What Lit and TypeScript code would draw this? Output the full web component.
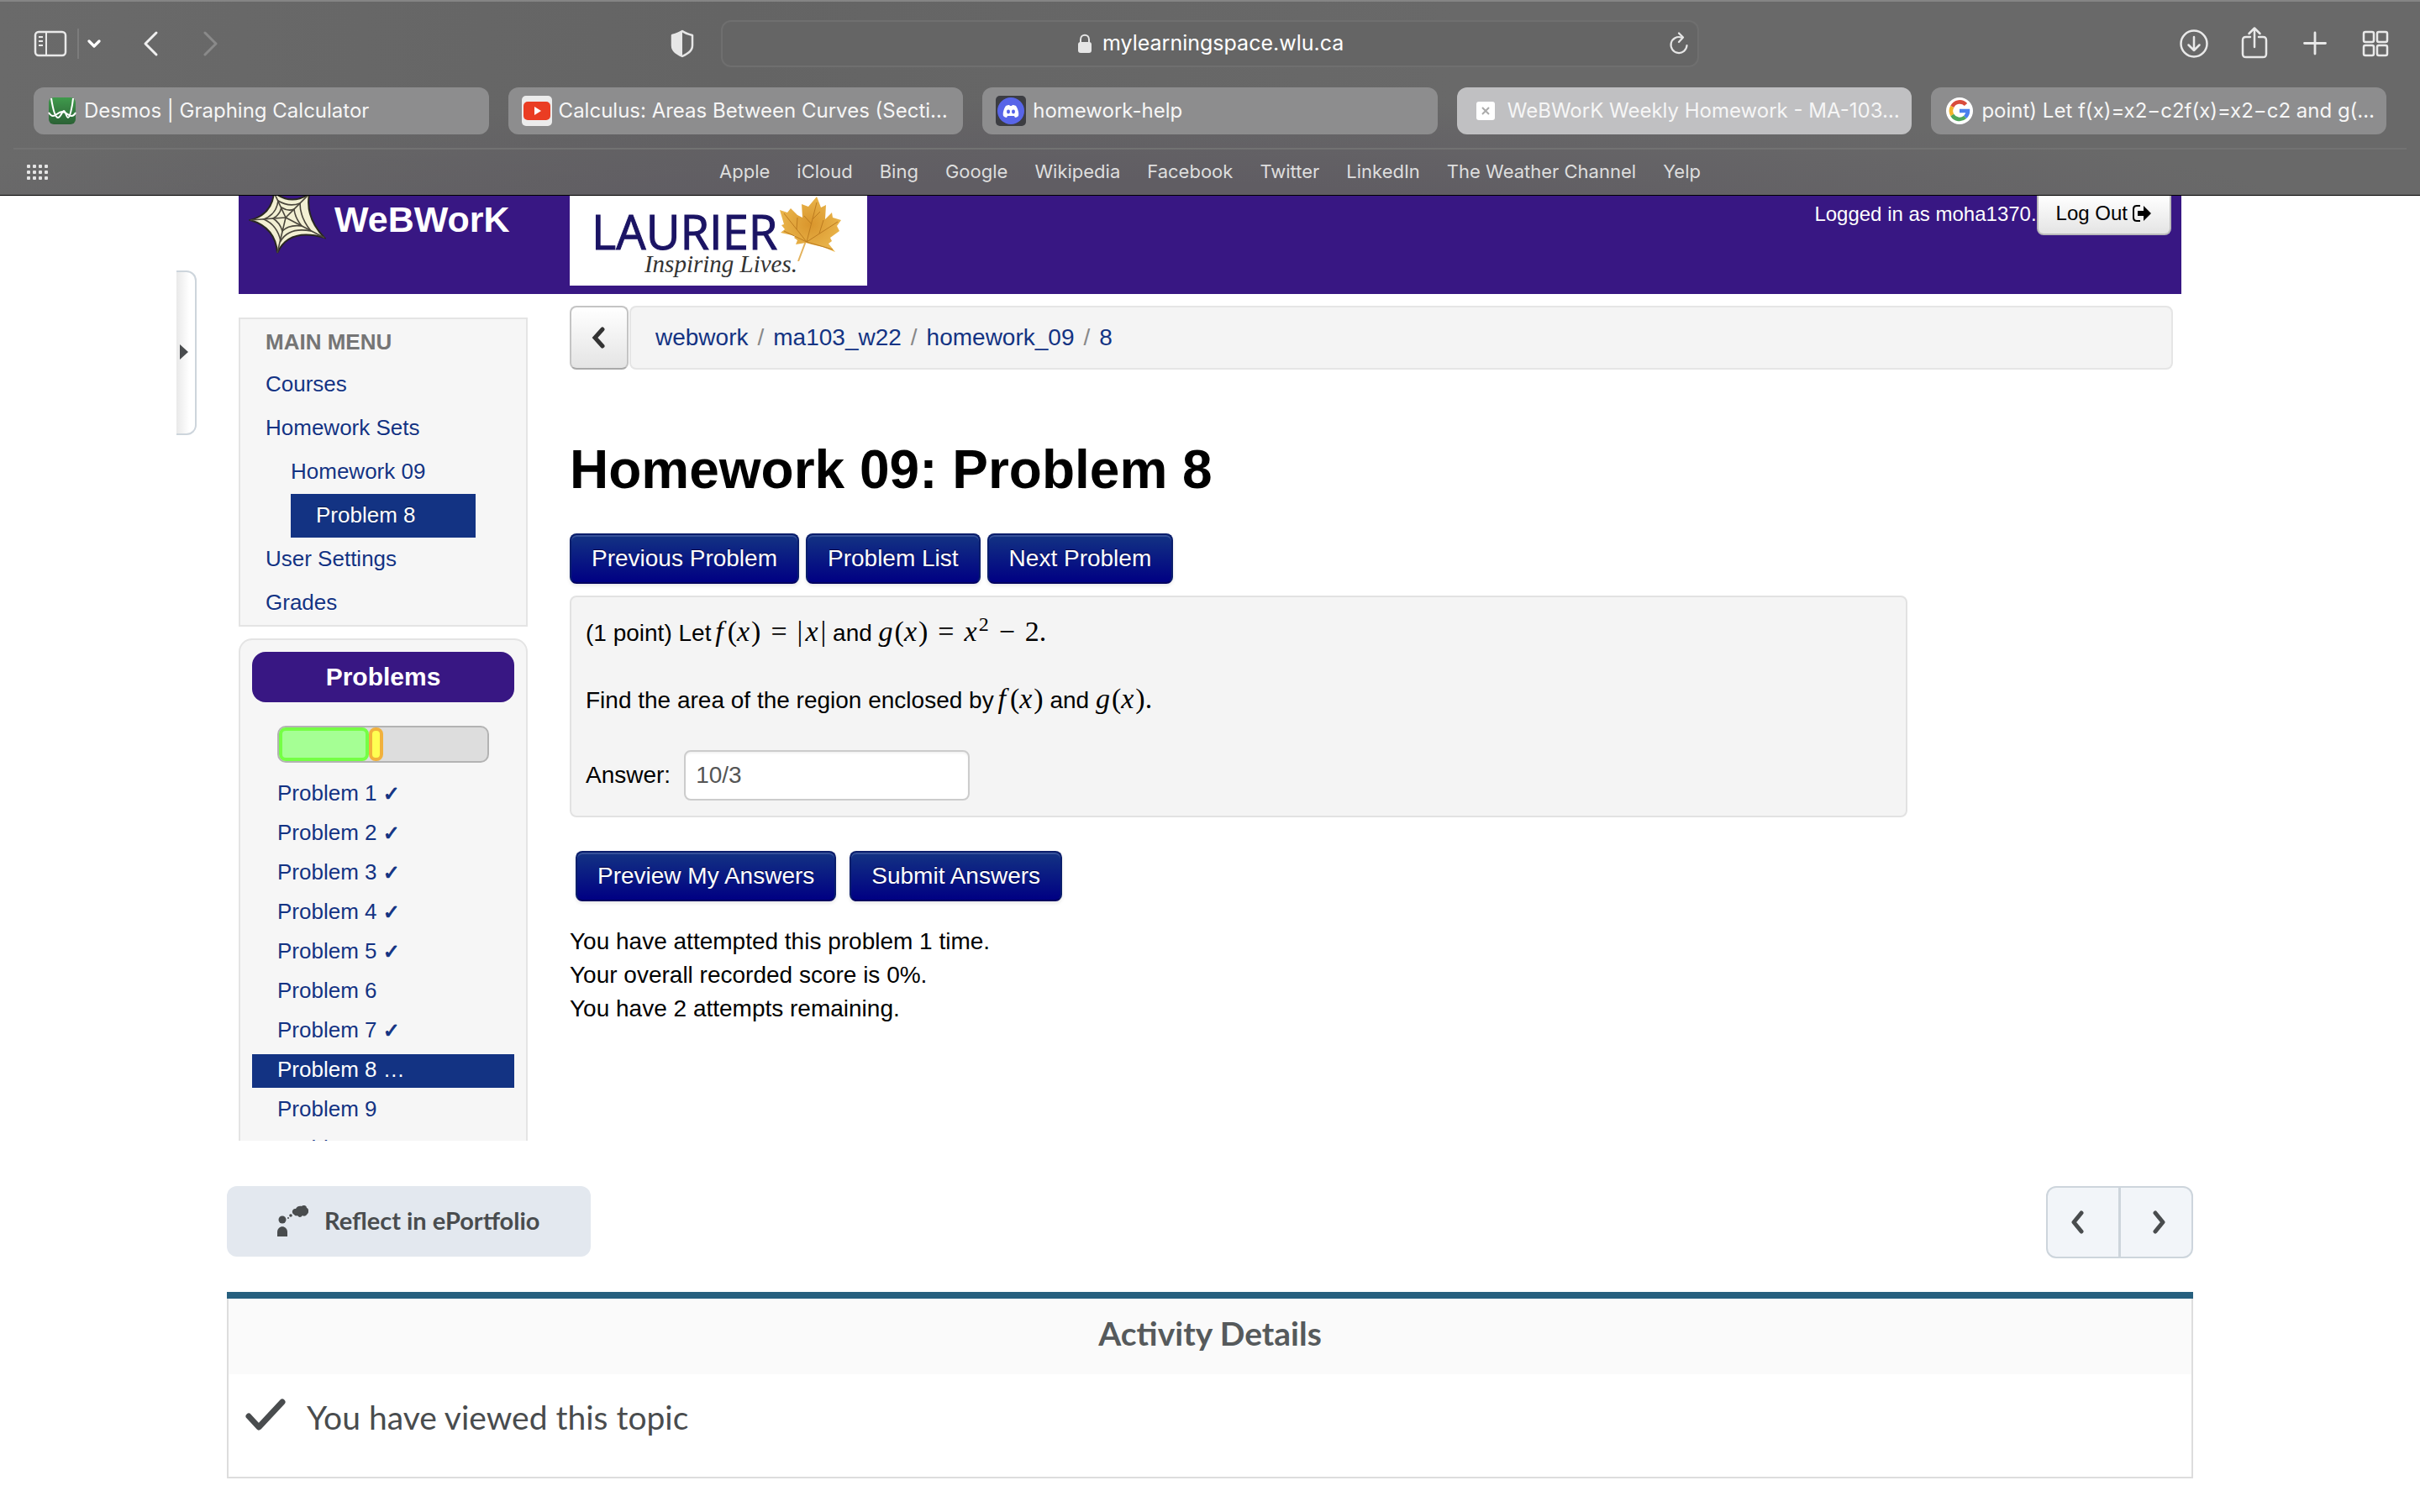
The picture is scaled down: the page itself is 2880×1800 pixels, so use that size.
import { LitElement, html, css, svg } from "lit";
import { customElement } from "lit/decorators.js";
import { classMap } from "lit/directives/class-map.js";

const tabs = [
  { icon: "desmos", label: "Desmos | Graphing Calculator" },
  { icon: "youtube", label: "Calculus: Areas Between Curves (Secti…" },
  { icon: "discord", label: "homework-help" },
  { icon: "close", label: "WeBWorK Weekly Homework - MA-103…", active: true },
  { icon: "google", label: "point) Let f(x)=x2−c2f(x)=x2−c2 and g(…" },
];

const bookmarks = [
  "Apple", "iCloud", "Bing", "Google", "Wikipedia", "Facebook",
  "Twitter", "LinkedIn", "The Weather Channel", "Yelp",
];

const problems = [
  { n: 1, mark: "✓" }, { n: 2, mark: "✓" }, { n: 3, mark: "✓" },
  { n: 4, mark: "✓" }, { n: 5, mark: "✓" }, { n: 6, mark: "" },
  { n: 7, mark: "✓" }, { n: 8, mark: "…" }, { n: 9, mark: "" }, { n: 10, mark: "" },
];

const favicons: Record<string, unknown> = {
  desmos: svg`<defs><linearGradient id="dg" x2="0" y2="1"><stop stop-color="#3f9a4c"/><stop offset="1" stop-color="#2b6135"/></linearGradient></defs>
    <rect x="2" y="2" width="32" height="32" rx="6" fill="url(#dg)"/>
    <path d="M5 3C7 16 10 26 13 26S18 18 20 18s3 8 5 8 5-12 6-23M2 20c2 3 3 4 5 4 4 0 6-5 11-5s7 5 11 5c2 0 4-2 5-4" fill="none" stroke="#fff" stroke-width="2"/>`,
  youtube: svg`<rect width="36" height="36" rx="5" fill="#ececec"/><rect x="2" y="7" width="32" height="22" rx="5" fill="#ea3d23"/><path d="M15 13v10l8-5z" fill="#fff"/>`,
  discord: svg`<rect width="36" height="36" rx="5" fill="#3c3d42"/><circle cx="18" cy="18" r="16" fill="#5865e8"/>
    <path d="M12 12c2-1 3-1 4-1l1 1h2l1-1c1 0 2 0 4 1 2 3 4 8 3 12-1 1-3 2-4 2l-1-2h-8l-1 2c-1 0-3-1-4-2-1-4 1-9 3-12z" fill="#fff"/>
    <ellipse cx="15" cy="19" rx="2" ry="2.400" fill="#5865e8"/><ellipse cx="21" cy="19" rx="2" ry="2.400" fill="#5865e8"/>`,
  close: svg`<rect x="7" y="7" width="22" height="22" rx="3" fill="#fff"/><path d="M14 14l8 8M22 14L14 22" stroke="#aaa" stroke-width="2"/>`,
  google: svg`<circle cx="18" cy="18" r="16" fill="#fff"/><g fill="none" stroke-width="4.600">
    <path d="M25.500 10.500A10 10 0 0 0 9.300 13" stroke="#d94c3d"/><path d="M9.300 13a10 10 0 0 0 0 10" stroke="#f2b42c"/>
    <path d="M9.300 23a10 10 0 0 0 15.400 2.400" stroke="#4fa65a"/><path d="M24.700 25.400A10 10 0 0 0 27.900 18H18" stroke="#4a80ee"/></g>`,
};

const chromeIcons = {
  sidebar: html`<svg width="40" height="32" viewBox="0 0 40 32"><rect x="2" y="2" width="36" height="28" rx="4" fill="none" stroke="#e9e9e9" stroke-width="2.500"/><path d="M15 2v28" stroke="#e9e9e9" stroke-width="2"/><path d="M6 8h5M6 13h5M6 18h5" stroke="#e9e9e9" stroke-width="2"/></svg>`,
  down: html`<svg width="16" height="12" viewBox="0 0 16 12"><path d="M2 3l6 6 6-6" fill="none" stroke="#fff" stroke-width="3.200" stroke-linecap="round" stroke-linejoin="round"/></svg>`,
  back: html`<svg width="36" height="36" viewBox="0 0 36 36"><path d="M25 5L12 18l13 13" fill="none" stroke="#f0f0f0" stroke-width="3" stroke-linecap="round" stroke-linejoin="round"/></svg>`,
  forward: html`<svg width="36" height="36" viewBox="0 0 36 36"><path d="M11 5l13 13-13 13" fill="none" stroke="#8a8a8a" stroke-width="3" stroke-linecap="round" stroke-linejoin="round"/></svg>`,
  shield: html`<svg width="28" height="34" viewBox="0 0 28 34"><path d="M14 2c4 3 8 4 12 5v12c0 7-6 10-12 13C8 29 2 26 2 19V7c4-1 8-2 12-5z" fill="none" stroke="#e6e6e6" stroke-width="2.500" stroke-linejoin="round"/><path d="M14 2v30C8 29 2 26 2 19V7c4-1 8-2 12-5z" fill="#e6e6e6"/></svg>`,
  lock: html`<svg width="18" height="26" viewBox="0 0 18 26"><rect x="1" y="11" width="16" height="13" rx="3" fill="#e6e6e6"/><path d="M4 12V8c0-7 10-7 10 0v4" fill="none" stroke="#e6e6e6" stroke-width="2"/></svg>`,
  reload: html`<svg width="24" height="28" viewBox="0 0 24 28"><path d="M15 6.500A9.500 9.500 0 1 0 21.500 16" fill="none" stroke="#e6e6e6" stroke-width="2.200" stroke-linecap="round"/><path d="M12 1.500l5 5-5 5.500" fill="none" stroke="#e6e6e6" stroke-width="2.200" stroke-linecap="round" stroke-linejoin="round"/></svg>`,
  download: html`<svg width="36" height="36" viewBox="0 0 36 36"><circle cx="18" cy="18" r="15.500" fill="none" stroke="#e9e9e9" stroke-width="2.500"/><path d="M18 10v16M11.500 19.500L18 26l6.500-6.500" fill="none" stroke="#e9e9e9" stroke-width="2.500" stroke-linecap="round" stroke-linejoin="round"/></svg>`,
  share: html`<svg width="36" height="42" viewBox="0 0 36 42"><path d="M13 13H8c-3 0-4 1-4 4v16c0 3 1 4 4 4h20c3 0 4-1 4-4V17c0-3-1-4-4-4h-5" fill="none" stroke="#e9e9e9" stroke-width="2.500" stroke-linecap="round"/><path d="M18 25V3M11.500 9L18 2.500l6.500 6.500" fill="none" stroke="#e9e9e9" stroke-width="2.500" stroke-linecap="round" stroke-linejoin="round"/></svg>`,
  plus: html`<svg width="36" height="36" viewBox="0 0 36 36"><path d="M18 5v25M5.500 17.500h25" stroke="#e9e9e9" stroke-width="2.800" stroke-linecap="round"/></svg>`,
  grid: html`<svg width="36" height="36" viewBox="0 0 36 36"><g fill="none" stroke="#e9e9e9" stroke-width="2.500"><rect x="4" y="4" width="12" height="12" rx="2"/><rect x="20" y="4" width="12" height="12" rx="2"/><rect x="4" y="20" width="12" height="12" rx="2"/><rect x="20" y="20" width="12" height="12" rx="2"/></g></svg>`,
  dots: html`<svg width="26" height="18" viewBox="0 0 26 18">${[0, 7, 14].map((y) => [0, 7, 14, 21].map((x) => svg`<rect x=${x} y=${y} width="4" height="4" rx="1" fill="#e4e4e4"/>`))}</svg>`,
};

@customElement("browser-bar")
export class BrowserBar extends LitElement {
  static styles = css`
    :host {
      display: block;
      border-top: 2px solid #858585;
      border-bottom: 1px solid #000;
      color: #f2f2f2;
      font-family: Inter, "Liberation Sans", sans-serif;
      background:
        radial-gradient(ellipse 50% 60% at 45% 110%, #605d63 30%, transparent),
        linear-gradient(90deg, #6a6a6a, #646464 30%, #696969 60%, #696969);
    }
    button { display: flex; padding: 0; border: 0; background: none; }
    svg { display: block; flex: none; }
    .tools { display: grid; grid-template-columns: 1fr minmax(0, 1164px) 1fr; align-items: center; height: 100px; margin-bottom: 2px; }
    .left, .right { display: flex; align-items: center; }
    .left { padding-left: 40px; }
    .rule { width: 2px; height: 36px; margin: 0 10px 0 12px; background: #7c7c7c; }
    .back { margin-left: 41px; }
    .forward { margin-left: 36px; }
    .privacy { margin: 0 32px 0 auto; }
    .right { justify-content: flex-end; gap: 36px; padding-right: 35px; }
    .address { display: flex; align-items: center; justify-content: center; height: 52px; border: 2px solid #6f6f6f; border-radius: 12px; background: #656565; }
    .address label { display: flex; align-items: center; gap: 12px; margin-left: auto; }
    .url { width: 288px; height: 32px; box-sizing: border-box; padding: 0 0 2px; border: 0; background: none; color: #fff; font: 25px/30px Inter, sans-serif; }
    .reload { width: 24px; margin: 0 10px 0 auto; }
    .balance { width: 36px; }
    .tabs { display: grid; grid-template-columns: repeat(5, minmax(0, 1fr)); gap: 23px; padding: 0 40px 16px; }
    .tab { display: flex; align-items: center; gap: 8px; height: 56px; padding: 0 16px; border-radius: 12px; background: #8d8d8e; color: #f6f6f6; font-size: 24px; line-height: 32px; text-decoration: none; white-space: nowrap; }
    .tab.active { background: #c0c0c2; }
    .marks { display: flex; align-items: center; justify-content: center; gap: 32px; height: 54px; margin: 0 16px; border-top: 2px solid #727272; font-size: 22px; line-height: 28px; }
    .marks a { padding-bottom: 2px; color: #dedede; text-decoration: none; }
    .dots { flex: 1; padding-left: 16px; }
    .end { flex: 1; padding-right: 16px; }
  `;
  render() {
    return html`
      <div class="tools">
        <div class="left">
          <button aria-label="Sidebar">${chromeIcons.sidebar}</button>
          <span class="rule"></span>
          <button aria-label="Tab groups">${chromeIcons.down}</button>
          <button class="back" aria-label="Back">${chromeIcons.back}</button>
          <button class="forward" aria-label="Forward">${chromeIcons.forward}</button>
          <button class="privacy" aria-label="Privacy report">${chromeIcons.shield}</button>
        </div>
        <div class="address">
          <span class="balance"></span>
          <label>${chromeIcons.lock}<input class="url" aria-label="Address" .value=${"mylearningspace.wlu.ca"} /></label>
          <button class="reload" aria-label="Reload">${chromeIcons.reload}</button>
        </div>
        <div class="right">
          <button aria-label="Downloads">${chromeIcons.download}</button>
          <button aria-label="Share">${chromeIcons.share}</button>
          <button aria-label="New tab">${chromeIcons.plus}</button>
          <button aria-label="Tab overview">${chromeIcons.grid}</button>
        </div>
      </div>
      <nav class="tabs">
        ${tabs.map((t) => html`<a href="#" class=${classMap({ tab: true, active: !!t.active })}>
          <svg width="36" height="36" viewBox="0 0 36 36">${favicons[t.icon]}</svg><span>${t.label}</span></a>`)}
      </nav>
      <nav class="marks">
        <span class="dots">${chromeIcons.dots}</span>
        ${bookmarks.map((b) => html`<a href="#">${b}</a>`)}
        <span class="end"></span>
      </nav>
    `;
  }
}

const helvetica = css`"Liberation Sans", Arial, sans-serif`;

@customElement("webwork-page")
export class WebworkPage extends LitElement {
  static styles = css`
    :host { display: block; overflow: hidden; position: relative; background: #fff; color: #000; font: 28px/40px ${helvetica}; }
    a { color: #133383; text-decoration: none; }
    svg { display: block; flex: none; }
    h1, h2, p, ul { margin: 0; padding: 0; }
    ul { list-style: none; }
    button { font: inherit; }
    .drawer { position: absolute; left: 210px; top: 89px; display: flex; align-items: center; width: 24px; height: 196px; padding: 0 0 2px 4px; border: 2px solid #cdd5dc; border-left: 0; border-radius: 0 12px 12px 0; background: linear-gradient(90deg, #e9e9e9, #fff 70%); box-sizing: border-box; }
    .page { margin: 0 284px; }

    .masthead { display: flex; align-items: flex-start; height: 117px; padding-right: 12px; background: #381783; color: #fff; }
    .brand { display: flex; gap: 10px; width: 382px; padding-left: 12px; font-size: 43px; font-weight: 700; line-height: 56px; }
    .crest { display: grid; grid-template-columns: 221px 80px; width: 328px; height: 107px; padding-left: 26px; background: #fff; }
    .name { display: flex; flex-direction: column; align-items: flex-end; }
    .laurier { align-self: flex-start; margin-top: 16px; color: #1b1464; font: 56px/52px "Open Sans", sans-serif; -webkit-text-stroke: 1px #1b1464; }
    .motto { color: #333; font: italic 29px/26px "Liberation Serif", serif; margin-right: -24px; }
    .user { margin-left: auto; font-size: 24px; line-height: 44px; }
    .logout { display: flex; align-items: center; gap: 6px; height: 47px; padding: 0 22px 4px 21px; border: 2px solid #bbb; border-width: 0 2px 2px; border-radius: 0 0 8px 8px; background: linear-gradient(#fff, #e4e4e4); color: #000; font-size: 24px; }

    .columns { display: grid; grid-template-columns: 344px minmax(0, 1fr); gap: 50px; align-items: start; }
    .side { padding-top: 28px; font-size: 26px; }
    .menu { border: 2px solid #e4e4e4; background: #f6f6f6; padding: 0 60px 0 30px; line-height: 50px; margin-bottom: 14px; }
    .menu a, .menu h2 { display: block; padding-bottom: 2px; }
    .menu a { text-shadow: 0 1px 0 #fff; }
    .menu h2 { padding: 2px 0 0; color: #757575; font-size: 26px; }
    .menu .sub, .menu .here { margin-left: 30px; }
    .menu .here { padding-left: 30px; background: #133383; color: #fff; text-shadow: 0 -1px 0 #0a1c4c; }
    .list { border: 2px solid #e4e4e4; border-radius: 16px; background: #f6f6f6; padding: 14px; }
    .list h2 { border-radius: 16px; background: #381783; color: #fff; font-size: 30px; line-height: 60px; text-align: center; }
    .progress { display: flex; height: 40px; margin: 28px 30px 18px; border: 2px solid #b3b3b3; border-radius: 10px; background: #ddd; }
    .done, .tried { border: 4px solid #75ff45; border-radius: 8px; background: #a5ff94; box-sizing: border-box; }
    .tried { border-color: #f1b13c; background: #ffff52; }
    .list ul { display: grid; gap: 7px; }
    .list a { display: block; padding: 0 0 4px 30px; line-height: 36px; white-space: pre; }
    .list .now { background: #133383; color: #fff; }
    .tick { font-family: "DejaVu Sans", sans-serif; font-size: 24px; line-height: 0; -webkit-text-stroke: 1px #133383; }

    .main { padding-top: 14px; }
    .crumbs { display: flex; gap: 1px; margin: 0 10px 79px 0; }
    .up { display: grid; place-items: center; width: 70px; height: 76px; padding: 0 2px 0 0; border: 2px solid #c4c4c4; border-bottom-color: #a9a9a9; border-radius: 8px; background: linear-gradient(#fff, #e4e4e4); }
    .path { flex: 1; display: flex; align-items: center; gap: 11px; padding-left: 29px; border: 2px solid #e5e5e5; border-radius: 8px; background: #f4f4f4; color: #888; }
    h1 { font-size: 64px; line-height: 80px; margin-bottom: 36px; }
    .row { display: flex; gap: 8px; }
    .btn { height: 60px; padding: 0 24px; border: 2px solid #0a1e6c; border-bottom-color: #000060; border-radius: 8px; background: linear-gradient(#133383, #000083); color: #fff; text-shadow: 0 -1px 0 #000040; box-shadow: inset 0 2px 0 #36519a, 0 2px 4px #0000001a; }
    .problem { width: 83%; box-sizing: border-box; margin-top: 14px; padding: 23px 17px 18px; border: 2px solid #e2e2e2; border-radius: 8px; background: #f4f4f4; }
    .problem p { margin-bottom: 40px; }
    .problem p + p { margin-bottom: 39px; }
    .math { font: 34px/32px "Liberation Serif", serif; white-space: nowrap; }
    .math i { padding-right: 2px; }
    .math .f { margin-left: -3px; padding-right: 5px; }
    .math .abs { padding: 0 3px; }
    .rel { padding: 0 12px; }
    sup { font-size: 24px; line-height: 0; vertical-align: 12px; }
    .answer { display: flex; align-items: center; gap: 16px; }
    .answer input { width: 340px; height: 60px; box-sizing: border-box; padding: 0 12px; border: 2px solid #ccc; border-radius: 8px; box-shadow: inset 0 2px 2px #0000000d; color: #555; font: inherit; }
    .actions { gap: 16px; margin: 40px 0 28px 7px; }
  `;
  render() {
    const fx = html`<i class="f">f</i>(<i>x</i>)`;
    const gx = html`<i>g</i>(<i>x</i>)`;
    return html`
      <button class="drawer" aria-label="Open panel"><svg width="10" height="18" viewBox="0 0 10 18"><path d="M0 0l10 9-10 9z" fill="#494c4e"/></svg></button>
      <div class="page">
        <header class="masthead">
          <div class="brand">
            <svg width="92" height="70" viewBox="0 0 92 70">
              <path d="M30 -4Q50 12 72 -2Q67 26 90 50Q48 38 34 68Q32 38 2 29Q28 22 30 -4z" fill="#f3f0d3" stroke="#2a2822" stroke-width="2"/>
              <g fill="none" stroke="#4a463c" stroke-width="1.600">
                <path d="M44 26L30 -4M44 26L72 -2M44 26L90 50M44 26L34 68M44 26L2 29"/>
                <path d="M35 6Q48 14 61 9Q61 26 74 42Q48 37 38 54Q34 35 18 28Q33 22 35 6z"/>
                <path d="M39 14Q47 19 54 16Q55 26 63 36Q48 34 40 42Q37 32 29 27Q37 23 39 14z"/>
              </g>
            </svg>
            <span>WeBWorK</span>
          </div>
          <div class="crest">
            <div class="name"><span class="laurier">LAURIER</span><span class="motto">Inspiring Lives.</span></div>
            <svg width="80" height="78" viewBox="0 0 80 78">
              <defs><radialGradient id="leaf"><stop stop-color="#d9952c"/><stop offset="1" stop-color="#e9b44a"/></radialGradient></defs>
              <path d="M34 54L25 78" stroke="#e3b25c" stroke-width="2"/>
              <path d="M47 1l5 13 6-3-1 17 8-8 1 6 10 3-5 7 3 6-11 8 2 4-4 3 8 10-15-6-13-3-7-2-12 2 2-5-4-3 2-2L4 44l5-4-4-5 3-1-5-17 9 3 4-5 8 8 6 3-1-16 8 3z" fill="url(#leaf)"/>
              <path d="M35 55L47 8M35 55L8 21M35 55L72 31M35 55L66 64M35 55L8 42M42 28l9-9M41 34l-9-10M50 45l5-16M23 40l1-14" fill="none" stroke="#bd7c20" stroke-width="1"/>
            </svg>
          </div>
          <span class="user">Logged in as moha1370.</span>
          <button class="logout">Log Out
            <svg width="22" height="20" viewBox="0 0 22 20"><path d="M9 1H5C2 1 1 2 1 5v10c0 3 1 4 4 4h4" fill="none" stroke="#000" stroke-width="2"/><path d="M6 7h7V1l9 9-9 9v-6H6z" fill="#000"/></svg>
          </button>
        </header>
        <div class="columns">
          <aside class="side">
            <nav class="menu">
              <h2>MAIN MENU</h2>
              <a href="#">Courses</a>
              <a href="#">Homework Sets</a>
              <a href="#" class="sub">Homework 09</a>
              <a href="#" class="here">Problem 8</a>
              <a href="#">User Settings</a>
              <a href="#">Grades</a>
            </nav>
            <nav class="list">
              <h2>Problems</h2>
              <div class="progress"><span class="done" style="width:43%"></span><span class="tried" style="width:7%"></span></div>
              <ul>${problems.map((p) => html`<li><a href="#" class=${classMap({ now: p.n === 8 })}>Problem ${p.n} <span class=${classMap({ tick: p.mark === "✓" })}>${p.mark}</span></a></li>`)}</ul>
            </nav>
          </aside>
          <main class="main">
            <nav class="crumbs">
              <button class="up" aria-label="Up"><svg width="18" height="26" viewBox="0 0 18 26"><path d="M14 3L5 13l9 10" fill="none" stroke="#333" stroke-width="5" stroke-linecap="round"/></svg></button>
              <div class="path"><a href="#">webwork</a>/<a href="#">ma103_w22</a>/<a href="#">homework_09</a>/<a href="#">8</a></div>
            </nav>
            <h1>Homework 09: Problem 8</h1>
            <div class="row"><button class="btn">Previous Problem</button><button class="btn">Problem List</button><button class="btn">Next Problem</button></div>
            <form class="problem" @submit=${(e: Event) => e.preventDefault()}>
              <p>(1 point) Let <span class="math">${fx}<span class="rel">=</span>|<i class="abs">x</i>|</span> and <span class="math">${gx}<span class="rel">=</span><i>x</i><sup>2</sup><span class="rel">−</span>2.</span></p>
              <p>Find the area of the region enclosed by <span class="math">${fx}</span> and <span class="math">${gx}.</span></p>
              <div class="answer"><label for="ans">Answer:</label><input id="ans" type="text" .value=${"10/3"} /></div>
            </form>
            <div class="row actions"><button class="btn">Preview My Answers</button><button class="btn">Submit Answers</button></div>
            <p>You have attempted this problem 1 time.<br />Your overall recorded score is 0%.<br />You have 2 attempts remaining.</p>
          </main>
        </div>
      </div>
    `;
  }
}

@customElement("topic-footer")
export class TopicFooter extends LitElement {
  static styles = css`
    :host { display: block; padding: 54px 270px 40px; background: #fff; color: #494c4e; font-family: Lato, sans-serif; }
    svg { display: block; flex: none; }
    .bar { display: flex; justify-content: space-between; align-items: flex-start; margin-bottom: 40px; }
    .reflect { display: flex; align-items: center; gap: 19px; height: 84px; padding: 0 60px 2px; border: 0; border-radius: 12px; background: #e3e8ef; color: inherit; font: 700 29px/36px Lato, sans-serif; }
    .pager { display: flex; border: 2px solid #cdd5dc; border-radius: 12px; background: #f2f5f9; }
    .pager button { display: grid; place-items: center; width: 84px; height: 82px; padding: 0 14px 0 0; border: 0; background: none; }
    .pager button + button { width: 87px; padding: 0 0 0 8px; border-left: 3px solid #cdd5dc; }
    .details { border-top: 8px solid #27607f; }
    .body { border: 2px solid #ddd; border-top: 0; }
    h2 { margin: 0; padding: 17px 0 25px; background: #fafafa; color: #565a5c; font-size: 39px; line-height: 48px; text-align: center; }
    .viewed { display: flex; align-items: flex-start; gap: 24px; padding: 27px 19px 47px; font-size: 39px; line-height: 48px; }
  `;
  render() {
    return html`
      <div class="bar">
        <button class="reflect">
          <svg width="37" height="37" viewBox="0 0 37 37" fill="#494c4e"><circle cx="6" cy="17" r="4.500"/><path d="M0 37v-5c0-9 12-9 12 0v5z"/><circle cx="13" cy="15" r="1"/><circle cx="16" cy="12" r="1.800"/><path d="M20 11c-4-2-2-8 2-7 1-3 5-4 7-3 2-2 6-1 6 2 3 1 3 6 0 8-1 2-4 2-5 1-2 3-5 2-6 0-2 1-3 0-4-1z"/></svg>
          Reflect in ePortfolio
        </button>
        <div class="pager">
          <button aria-label="Previous"><svg width="18" height="28" viewBox="0 0 18 28"><path d="M14 3L5 14l9 11" fill="none" stroke="#494c4e" stroke-width="5" stroke-linecap="round" stroke-linejoin="round"/></svg></button>
          <button aria-label="Next"><svg width="18" height="28" viewBox="0 0 18 28"><path d="M4 3l9 11-9 11" fill="none" stroke="#494c4e" stroke-width="5" stroke-linecap="round" stroke-linejoin="round"/></svg></button>
        </div>
      </div>
      <section class="details">
        <div class="body">
          <h2>Activity Details</h2>
          <div class="viewed">
            <svg width="50" height="40" viewBox="0 0 50 40"><path d="M5 23l12 13L45 6" fill="none" stroke="#494c4e" stroke-width="7" stroke-linecap="round" stroke-linejoin="round"/></svg>
            <span>You have viewed this topic</span>
          </div>
        </div>
      </section>
    `;
  }
}

@customElement("app-root")
export class AppRoot extends LitElement {
  static styles = css`
    :host { display: flex; flex-direction: column; height: 100vh; background: #fff; }
    .frame { flex: 1; min-height: 0; }
  `;
  render() {
    return html`<browser-bar></browser-bar><webwork-page class="frame"></webwork-page><topic-footer></topic-footer>`;
  }
}
